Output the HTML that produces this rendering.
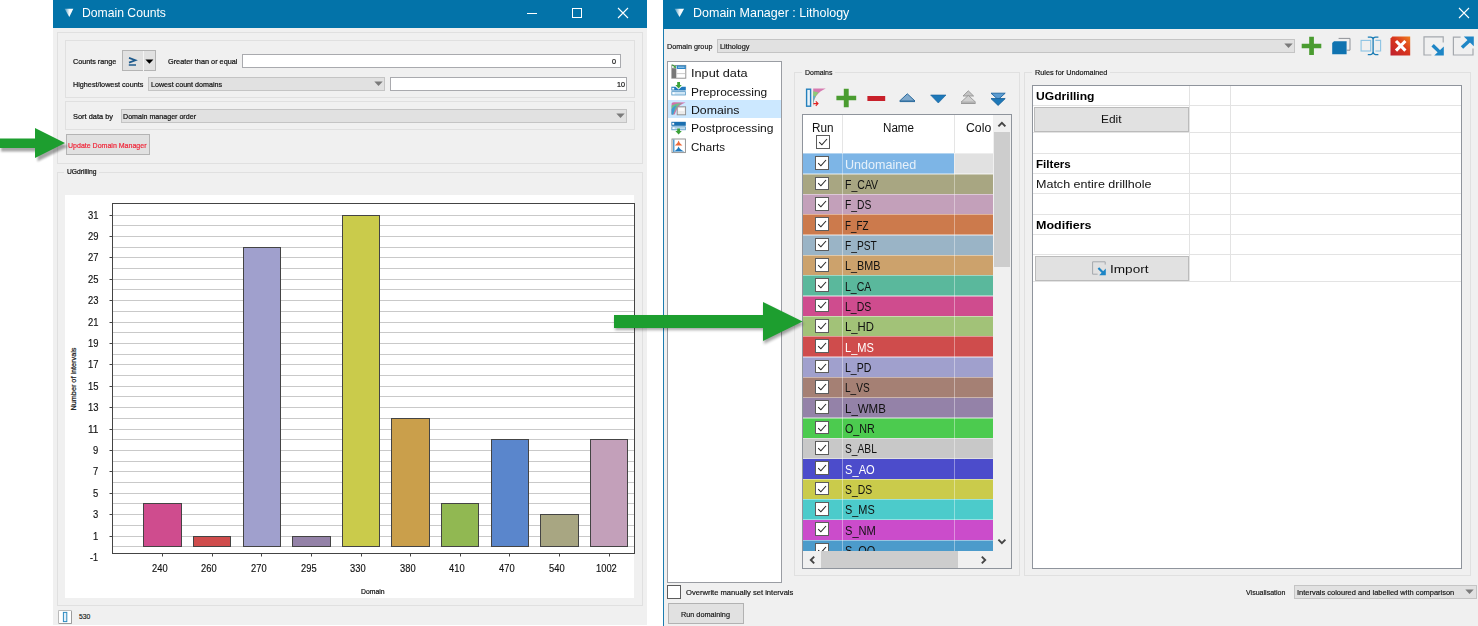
<!DOCTYPE html>
<html><head><meta charset="utf-8"><title>Domain Counts</title>
<style>
html,body{margin:0;padding:0;}
body{width:1478px;height:626px;overflow:hidden;background:#fff;position:relative;
font-family:"Liberation Sans",sans-serif;}
.a{position:absolute;box-sizing:border-box;}
.t{white-space:nowrap;}
</style></head><body>

<div class="a" style="left:53.00px;top:0.00px;width:594.00px;height:625.00px;background:#F0F0F0;"></div>
<div class="a" style="left:53.00px;top:0.00px;width:594.00px;height:28.00px;background:#0373A9;"></div>
<svg class="a" style="left:64.00px;top:8.00px;" width="11" height="11" viewBox="0 0 11 11"><defs><linearGradient id="ti" x1="0" y1="0" x2="1" y2="0"><stop offset="0" stop-color="#fff" stop-opacity="0.25"/><stop offset="0.55" stop-color="#fff" stop-opacity="0.95"/><stop offset="1" stop-color="#fff"/></linearGradient></defs><path d="M0.6 0.8 L9.3 0.8 L5.3 9 Z" fill="url(#ti)"/></svg>
<div class="a t" style="left:82.00px;top:3.80px;font-size:12.6px;line-height:18px;color:#fff;transform:scaleX(0.9673);transform-origin:0 50%;">Domain Counts</div>
<svg class="a" style="left:526.00px;top:7.00px;" width="12" height="12" viewBox="0 0 12 12"><path d="M1 6.5 H11" stroke="#fff" stroke-width="1"/></svg>
<svg class="a" style="left:571.00px;top:7.00px;" width="12" height="12" viewBox="0 0 12 12"><rect x="1.5" y="1.5" width="9" height="9" fill="none" stroke="#fff" stroke-width="1"/></svg>
<svg class="a" style="left:617.00px;top:7.00px;" width="12" height="12" viewBox="0 0 12 12"><path d="M1 1 L11 11 M11 1 L1 11" stroke="#fff" stroke-width="1.1"/></svg>
<div class="a" style="left:57.00px;top:32.00px;width:585.50px;height:131.50px;border:1px solid #E0E0E0;"></div>
<div class="a" style="left:65.00px;top:40.00px;width:570.00px;height:57.50px;border:1px solid #E0E0E0;"></div>
<div class="a t" style="left:72.70px;top:55.80px;font-size:8px;line-height:11px;color:#111;-webkit-text-stroke:0.22px currentColor;transform:scaleX(0.9015);transform-origin:0 50%;">Counts range</div>
<div class="a" style="left:121.50px;top:50.00px;width:34.50px;height:21.30px;background:#E1E1E1;border:1px solid #B4B4B4;"></div>
<div class="a" style="left:142.60px;top:51.00px;width:1.00px;height:19.50px;background:#F4F4F4;"></div>
<svg class="a" style="left:127.00px;top:55.00px;" width="11" height="12" viewBox="0 0 11 12"><path d="M2 2.9 L8.4 5.2 L2 7.6" fill="none" stroke="#1E5A8C" stroke-width="1.7"/><path d="M1.8 10 H9" stroke="#1E5A8C" stroke-width="1.5"/></svg>
<svg class="a" style="left:145.00px;top:58.70px;" width="9" height="6" viewBox="0 0 9 6"><path d="M0.4 0.4 H8.4 L4.4 4.8 Z" fill="#000"/></svg>
<div class="a t" style="left:167.50px;top:55.80px;font-size:8px;line-height:11px;color:#111;-webkit-text-stroke:0.22px currentColor;transform:scaleX(0.9139);transform-origin:0 50%;">Greater than or equal</div>
<div class="a" style="left:242.00px;top:54.00px;width:379.00px;height:13.60px;background:#fff;border:1px solid #A9AAAE;"></div>
<div class="a t" style="left:612.40px;top:55.70px;font-size:8px;line-height:11px;color:#111;-webkit-text-stroke:0.22px currentColor;transform:scaleX(0.8990);transform-origin:0 50%;">0</div>
<div class="a t" style="left:72.70px;top:78.70px;font-size:8px;line-height:11px;color:#111;-webkit-text-stroke:0.22px currentColor;transform:scaleX(0.9034);transform-origin:0 50%;">Highest/lowest counts</div>
<div class="a" style="left:148.00px;top:77.00px;width:237.00px;height:13.60px;background:#E1E1E1;border:1px solid #C4C4C4;"></div>
<div class="a t" style="left:150.50px;top:78.70px;font-size:8px;line-height:11px;color:#111;-webkit-text-stroke:0.22px currentColor;transform:scaleX(0.8919);transform-origin:0 50%;">Lowest count domains</div>
<svg class="a" style="left:374.00px;top:81.00px;" width="9" height="6" viewBox="0 0 9 6"><path d="M0.3 0.5 H8.7 L4.5 5 Z" fill="#7A7A7A"/></svg>
<div class="a" style="left:390.00px;top:76.80px;width:237.30px;height:13.80px;background:#fff;border:1px solid #A9AAAE;"></div>
<div class="a t" style="left:616.70px;top:78.50px;font-size:8px;line-height:11px;color:#111;-webkit-text-stroke:0.22px currentColor;transform:scaleX(0.8990);transform-origin:0 50%;">10</div>
<div class="a" style="left:65.00px;top:101.00px;width:570.00px;height:28.80px;border:1px solid #E0E0E0;"></div>
<div class="a t" style="left:72.70px;top:110.50px;font-size:8px;line-height:11px;color:#111;-webkit-text-stroke:0.22px currentColor;transform:scaleX(0.9273);transform-origin:0 50%;">Sort data by</div>
<div class="a" style="left:121.00px;top:109.40px;width:506.30px;height:13.30px;background:#E1E1E1;border:1px solid #C4C4C4;"></div>
<div class="a t" style="left:123.30px;top:110.80px;font-size:8px;line-height:11px;color:#111;-webkit-text-stroke:0.22px currentColor;transform:scaleX(0.8874);transform-origin:0 50%;">Domain manager order</div>
<svg class="a" style="left:616.00px;top:113.40px;" width="9" height="6" viewBox="0 0 9 6"><path d="M0.3 0.5 H8.7 L4.5 5 Z" fill="#7A7A7A"/></svg>
<div class="a" style="left:66.00px;top:134.30px;width:84.20px;height:21.20px;background:#E1E1E1;border:1px solid #B4B4B4;"></div>
<div class="a t" style="left:67.80px;top:139.80px;font-size:8px;line-height:11px;color:#F0273A;-webkit-text-stroke:0.22px currentColor;transform:scaleX(0.8782);transform-origin:0 50%;">Update Domain Manager</div>
<div class="a" style="left:57.00px;top:171.50px;width:585.50px;height:434.00px;border:1px solid #E0E0E0;"></div>
<div class="a" style="left:64.00px;top:166.00px;width:35.00px;height:10.00px;background:#F0F0F0;"></div>
<div class="a t" style="left:66.50px;top:166.60px;font-size:7.5px;line-height:10px;color:#111;-webkit-text-stroke:0.22px currentColor;transform:scaleX(0.8959);transform-origin:0 50%;">UGdrilling</div>
<div class="a" style="left:65.30px;top:194.80px;width:568.90px;height:403.20px;background:#fff;"></div>
<svg class="a" style="left:0.00px;top:0.00px;" width="700" height="626" viewBox="0 0 700 626"><path d="M112.5 546.50 H634.5" stroke="#C9C9C9" stroke-width="1"/><path d="M112.5 536.50 H634.5" stroke="#C9C9C9" stroke-width="1"/><path d="M112.5 525.50 H634.5" stroke="#C9C9C9" stroke-width="1"/><path d="M112.5 514.50 H634.5" stroke="#C9C9C9" stroke-width="1"/><path d="M112.5 503.50 H634.5" stroke="#C9C9C9" stroke-width="1"/><path d="M112.5 493.50 H634.5" stroke="#C9C9C9" stroke-width="1"/><path d="M112.5 482.50 H634.5" stroke="#C9C9C9" stroke-width="1"/><path d="M112.5 471.50 H634.5" stroke="#C9C9C9" stroke-width="1"/><path d="M112.5 461.50 H634.5" stroke="#C9C9C9" stroke-width="1"/><path d="M112.5 450.50 H634.5" stroke="#C9C9C9" stroke-width="1"/><path d="M112.5 439.50 H634.5" stroke="#C9C9C9" stroke-width="1"/><path d="M112.5 429.50 H634.5" stroke="#C9C9C9" stroke-width="1"/><path d="M112.5 418.50 H634.5" stroke="#C9C9C9" stroke-width="1"/><path d="M112.5 407.50 H634.5" stroke="#C9C9C9" stroke-width="1"/><path d="M112.5 396.50 H634.5" stroke="#C9C9C9" stroke-width="1"/><path d="M112.5 386.50 H634.5" stroke="#C9C9C9" stroke-width="1"/><path d="M112.5 375.50 H634.5" stroke="#C9C9C9" stroke-width="1"/><path d="M112.5 364.50 H634.5" stroke="#C9C9C9" stroke-width="1"/><path d="M112.5 354.50 H634.5" stroke="#C9C9C9" stroke-width="1"/><path d="M112.5 343.50 H634.5" stroke="#C9C9C9" stroke-width="1"/><path d="M112.5 332.50 H634.5" stroke="#C9C9C9" stroke-width="1"/><path d="M112.5 322.50 H634.5" stroke="#C9C9C9" stroke-width="1"/><path d="M112.5 311.50 H634.5" stroke="#C9C9C9" stroke-width="1"/><path d="M112.5 300.50 H634.5" stroke="#C9C9C9" stroke-width="1"/><path d="M112.5 289.50 H634.5" stroke="#C9C9C9" stroke-width="1"/><path d="M112.5 279.50 H634.5" stroke="#C9C9C9" stroke-width="1"/><path d="M112.5 268.50 H634.5" stroke="#C9C9C9" stroke-width="1"/><path d="M112.5 257.50 H634.5" stroke="#C9C9C9" stroke-width="1"/><path d="M112.5 247.50 H634.5" stroke="#C9C9C9" stroke-width="1"/><path d="M112.5 236.50 H634.5" stroke="#C9C9C9" stroke-width="1"/><path d="M112.5 225.50 H634.5" stroke="#C9C9C9" stroke-width="1"/><path d="M112.5 215.50 H634.5" stroke="#C9C9C9" stroke-width="1"/><rect x="143.50" y="503.50" width="38.00" height="43.00" fill="#CF4C8E" stroke="#444" stroke-width="1"/><path d="M162.50 553.5 V556.5" stroke="#444" stroke-width="1"/><rect x="193.50" y="536.50" width="37.00" height="10.00" fill="#CF4C4C" stroke="#444" stroke-width="1"/><path d="M212.50 553.5 V556.5" stroke="#444" stroke-width="1"/><rect x="243.50" y="247.50" width="37.00" height="299.00" fill="#A0A0CD" stroke="#444" stroke-width="1"/><path d="M261.50 553.5 V556.5" stroke="#444" stroke-width="1"/><rect x="292.50" y="536.50" width="38.00" height="10.00" fill="#9482A8" stroke="#444" stroke-width="1"/><path d="M311.50 553.5 V556.5" stroke="#444" stroke-width="1"/><rect x="342.50" y="215.50" width="37.00" height="331.00" fill="#CACB4B" stroke="#444" stroke-width="1"/><path d="M361.50 553.5 V556.5" stroke="#444" stroke-width="1"/><rect x="391.50" y="418.50" width="38.00" height="128.00" fill="#CA9F4B" stroke="#444" stroke-width="1"/><path d="M410.50 553.5 V556.5" stroke="#444" stroke-width="1"/><rect x="441.50" y="503.50" width="37.00" height="43.00" fill="#91B852" stroke="#444" stroke-width="1"/><path d="M460.50 553.5 V556.5" stroke="#444" stroke-width="1"/><rect x="491.50" y="439.50" width="37.00" height="107.00" fill="#5A86CC" stroke="#444" stroke-width="1"/><path d="M509.50 553.5 V556.5" stroke="#444" stroke-width="1"/><rect x="540.50" y="514.50" width="38.00" height="32.00" fill="#A8A682" stroke="#444" stroke-width="1"/><path d="M559.50 553.5 V556.5" stroke="#444" stroke-width="1"/><rect x="590.50" y="439.50" width="37.00" height="107.00" fill="#C3A0BA" stroke="#444" stroke-width="1"/><path d="M609.50 553.5 V556.5" stroke="#444" stroke-width="1"/><rect x="112.5" y="203.5" width="522.0" height="350.0" fill="none" stroke="#444" stroke-width="1"/><path d="M109.5 536.50 H112.5" stroke="#444" stroke-width="1"/><path d="M109.5 514.50 H112.5" stroke="#444" stroke-width="1"/><path d="M109.5 493.50 H112.5" stroke="#444" stroke-width="1"/><path d="M109.5 471.50 H112.5" stroke="#444" stroke-width="1"/><path d="M109.5 450.50 H112.5" stroke="#444" stroke-width="1"/><path d="M109.5 429.50 H112.5" stroke="#444" stroke-width="1"/><path d="M109.5 407.50 H112.5" stroke="#444" stroke-width="1"/><path d="M109.5 386.50 H112.5" stroke="#444" stroke-width="1"/><path d="M109.5 364.50 H112.5" stroke="#444" stroke-width="1"/><path d="M109.5 343.50 H112.5" stroke="#444" stroke-width="1"/><path d="M109.5 322.50 H112.5" stroke="#444" stroke-width="1"/><path d="M109.5 300.50 H112.5" stroke="#444" stroke-width="1"/><path d="M109.5 279.50 H112.5" stroke="#444" stroke-width="1"/><path d="M109.5 257.50 H112.5" stroke="#444" stroke-width="1"/><path d="M109.5 236.50 H112.5" stroke="#444" stroke-width="1"/><path d="M109.5 215.50 H112.5" stroke="#444" stroke-width="1"/></svg>
<div class="a t" style="left:90.20px;top:550.00px;font-size:10.4px;line-height:15px;color:#111;-webkit-text-stroke:0.15px currentColor;transform:scaleX(0.8651);transform-origin:0 50%;">-1</div>
<div class="a t" style="left:92.95px;top:528.60px;font-size:10.4px;line-height:15px;color:#111;-webkit-text-stroke:0.15px currentColor;transform:scaleX(0.9076);transform-origin:0 50%;">1</div>
<div class="a t" style="left:92.95px;top:507.20px;font-size:10.4px;line-height:15px;color:#111;-webkit-text-stroke:0.15px currentColor;transform:scaleX(0.9076);transform-origin:0 50%;">3</div>
<div class="a t" style="left:92.95px;top:485.80px;font-size:10.4px;line-height:15px;color:#111;-webkit-text-stroke:0.15px currentColor;transform:scaleX(0.9076);transform-origin:0 50%;">5</div>
<div class="a t" style="left:92.95px;top:464.40px;font-size:10.4px;line-height:15px;color:#111;-webkit-text-stroke:0.15px currentColor;transform:scaleX(0.9076);transform-origin:0 50%;">7</div>
<div class="a t" style="left:92.95px;top:443.00px;font-size:10.4px;line-height:15px;color:#111;-webkit-text-stroke:0.15px currentColor;transform:scaleX(0.9076);transform-origin:0 50%;">9</div>
<div class="a t" style="left:87.70px;top:421.60px;font-size:10.4px;line-height:15px;color:#111;-webkit-text-stroke:0.15px currentColor;transform:scaleX(0.9725);transform-origin:0 50%;">11</div>
<div class="a t" style="left:87.70px;top:400.20px;font-size:10.4px;line-height:15px;color:#111;-webkit-text-stroke:0.15px currentColor;transform:scaleX(0.9076);transform-origin:0 50%;">13</div>
<div class="a t" style="left:87.70px;top:378.80px;font-size:10.4px;line-height:15px;color:#111;-webkit-text-stroke:0.15px currentColor;transform:scaleX(0.9076);transform-origin:0 50%;">15</div>
<div class="a t" style="left:87.70px;top:357.40px;font-size:10.4px;line-height:15px;color:#111;-webkit-text-stroke:0.15px currentColor;transform:scaleX(0.9076);transform-origin:0 50%;">17</div>
<div class="a t" style="left:87.70px;top:336.00px;font-size:10.4px;line-height:15px;color:#111;-webkit-text-stroke:0.15px currentColor;transform:scaleX(0.9076);transform-origin:0 50%;">19</div>
<div class="a t" style="left:87.70px;top:314.60px;font-size:10.4px;line-height:15px;color:#111;-webkit-text-stroke:0.15px currentColor;transform:scaleX(0.9076);transform-origin:0 50%;">21</div>
<div class="a t" style="left:87.70px;top:293.20px;font-size:10.4px;line-height:15px;color:#111;-webkit-text-stroke:0.15px currentColor;transform:scaleX(0.9076);transform-origin:0 50%;">23</div>
<div class="a t" style="left:87.70px;top:271.80px;font-size:10.4px;line-height:15px;color:#111;-webkit-text-stroke:0.15px currentColor;transform:scaleX(0.9076);transform-origin:0 50%;">25</div>
<div class="a t" style="left:87.70px;top:250.40px;font-size:10.4px;line-height:15px;color:#111;-webkit-text-stroke:0.15px currentColor;transform:scaleX(0.9076);transform-origin:0 50%;">27</div>
<div class="a t" style="left:87.70px;top:229.00px;font-size:10.4px;line-height:15px;color:#111;-webkit-text-stroke:0.15px currentColor;transform:scaleX(0.9076);transform-origin:0 50%;">29</div>
<div class="a t" style="left:87.70px;top:207.60px;font-size:10.4px;line-height:15px;color:#111;-webkit-text-stroke:0.15px currentColor;transform:scaleX(0.9076);transform-origin:0 50%;">31</div>
<div class="a t" style="left:151.80px;top:560.50px;font-size:10.4px;line-height:15px;color:#111;-webkit-text-stroke:0.15px currentColor;transform:scaleX(0.8990);transform-origin:0 50%;">240</div>
<div class="a t" style="left:201.40px;top:560.50px;font-size:10.4px;line-height:15px;color:#111;-webkit-text-stroke:0.15px currentColor;transform:scaleX(0.8990);transform-origin:0 50%;">260</div>
<div class="a t" style="left:251.00px;top:560.50px;font-size:10.4px;line-height:15px;color:#111;-webkit-text-stroke:0.15px currentColor;transform:scaleX(0.8990);transform-origin:0 50%;">270</div>
<div class="a t" style="left:300.60px;top:560.50px;font-size:10.4px;line-height:15px;color:#111;-webkit-text-stroke:0.15px currentColor;transform:scaleX(0.8990);transform-origin:0 50%;">295</div>
<div class="a t" style="left:350.20px;top:560.50px;font-size:10.4px;line-height:15px;color:#111;-webkit-text-stroke:0.15px currentColor;transform:scaleX(0.8990);transform-origin:0 50%;">330</div>
<div class="a t" style="left:399.80px;top:560.50px;font-size:10.4px;line-height:15px;color:#111;-webkit-text-stroke:0.15px currentColor;transform:scaleX(0.8990);transform-origin:0 50%;">380</div>
<div class="a t" style="left:449.40px;top:560.50px;font-size:10.4px;line-height:15px;color:#111;-webkit-text-stroke:0.15px currentColor;transform:scaleX(0.8990);transform-origin:0 50%;">410</div>
<div class="a t" style="left:499.00px;top:560.50px;font-size:10.4px;line-height:15px;color:#111;-webkit-text-stroke:0.15px currentColor;transform:scaleX(0.8990);transform-origin:0 50%;">470</div>
<div class="a t" style="left:548.60px;top:560.50px;font-size:10.4px;line-height:15px;color:#111;-webkit-text-stroke:0.15px currentColor;transform:scaleX(0.8990);transform-origin:0 50%;">540</div>
<div class="a t" style="left:595.60px;top:560.50px;font-size:10.4px;line-height:15px;color:#111;-webkit-text-stroke:0.15px currentColor;transform:scaleX(0.8990);transform-origin:0 50%;">1002</div>
<div class="a t" style="left:360.80px;top:587.30px;font-size:7.0px;line-height:10px;color:#111;-webkit-text-stroke:0.2px currentColor;transform:scaleX(0.9784);transform-origin:0 50%;">Domain</div>
<div class="a t" style="left:74px;top:379.4px;width:0;height:0;"><div class="a t" style="left:-50px;top:-5px;width:100px;height:10px;line-height:10px;font-size:7.25px;text-align:center;color:#111;-webkit-text-stroke:0.2px #111;transform:rotate(-90deg);">Number of intervals</div></div>
<div class="a" style="left:58.00px;top:609.60px;width:14.40px;height:14.80px;background:#fff;border:1px solid #b9b9b9;border-radius:1.5px;border-right-color:#9c9c9c;border-bottom-color:#9c9c9c;"></div>
<svg class="a" style="left:62.00px;top:611.00px;" width="7" height="12" viewBox="0 0 7 12"><rect x="1.4" y="1.4" width="3.4" height="9.2" fill="#E3EFF8" stroke="#2E8BC0" stroke-width="1"/></svg>
<div class="a t" style="left:79.00px;top:612.00px;font-size:6.8px;line-height:10px;color:#111;-webkit-text-stroke:0.14px currentColor;">530</div>
<div class="a" style="left:663.00px;top:0.00px;width:815.00px;height:626.00px;background:#F0F0F0;"></div>
<div class="a" style="left:663.00px;top:0.00px;width:1.00px;height:626.00px;background:#1C7CB0;"></div>
<div class="a" style="left:663.00px;top:0.00px;width:815.00px;height:28.50px;background:#0373A9;"></div>
<svg class="a" style="left:674.00px;top:8.00px;" width="11" height="11" viewBox="0 0 11 11"><path d="M0.6 0.8 L10.1 0.8 L5.5 9 Z" fill="url(#ti)"/></svg>
<div class="a t" style="left:693.30px;top:5.20px;font-size:12.2px;line-height:17px;color:#fff;transform:scaleX(1.0256);transform-origin:0 50%;">Domain Manager : Lithology</div>
<svg class="a" style="left:1458.00px;top:7.00px;" width="12" height="12" viewBox="0 0 12 12"><path d="M1 1 L11 11 M11 1 L1 11" stroke="#fff" stroke-width="1.1"/></svg>
<div class="a t" style="left:666.80px;top:41.70px;font-size:6.4px;line-height:9px;color:#111;-webkit-text-stroke:0.14px currentColor;transform:scaleX(1.1318);transform-origin:0 50%;">Domain group</div>
<div class="a" style="left:717.30px;top:39.30px;width:577.70px;height:13.50px;background:#E1E1E1;border:1px solid #C4C4C4;"></div>
<div class="a t" style="left:720.00px;top:41.70px;font-size:6.4px;line-height:9px;color:#111;-webkit-text-stroke:0.14px currentColor;transform:scaleX(1.1515);transform-origin:0 50%;">Lithology</div>
<svg class="a" style="left:1284.00px;top:43.20px;" width="9" height="6" viewBox="0 0 9 6"><path d="M0.3 0.5 H8.7 L4.5 5 Z" fill="#7A7A7A"/></svg>
<svg class="a" style="left:1301.00px;top:36.00px;" width="22" height="20" viewBox="0 0 22 20"><path d="M8.2 0.8 H12.9 V7.7 H20.3 V12.3 H12.9 V19.1 H8.2 V12.3 H0.7 V7.7 H8.2 Z" fill="#4A9C30"/></svg>
<svg class="a" style="left:1331.00px;top:36.00px;" width="22" height="20" viewBox="0 0 22 20"><path d="M7.6 2.4 H19 V14.2 H15.6" fill="#F0F0F0" stroke="#8e9298" stroke-width="1"/><path d="M1.2 7 L3 5.3 H15.6 V18.2 H1.2 Z" fill="#0F73B0"/></svg>
<svg class="a" style="left:1360.00px;top:36.00px;" width="22" height="20" viewBox="0 0 22 20"><rect x="1.1" y="4.4" width="9.6" height="10.6" fill="none" stroke="#8CC3E3" stroke-width="1.1"/><path d="M15.4 4.4 H20.6 V15 H15.4" fill="none" stroke="#8CC3E3" stroke-width="1.1"/><path d="M7.8 1.2 H10.6 Q13.1 1.2 13.1 3.6 V15.8 Q13.1 18.2 10.6 18.6 H7.8 M18.4 1.2 H15.6 Q13.1 1.2 13.1 3.6 M18.4 18.6 H15.6 Q13.1 18.2 13.1 15.8" fill="none" stroke="#1A7CB5" stroke-width="1.3"/></svg>
<svg class="a" style="left:1390.00px;top:36.00px;" width="22" height="20" viewBox="0 0 22 20"><defs><linearGradient id="rg" x1="0" y1="1" x2="1" y2="0"><stop offset="0" stop-color="#BE1E2D"/><stop offset="0.55" stop-color="#D9381E"/><stop offset="1" stop-color="#F08020"/></linearGradient></defs><path d="M2.4 0.4 H20.2 V19.4 H0.5 V2.6 Z" fill="url(#rg)"/><path d="M6 5 L15.4 14.6 M15.4 5 L6 14.6" stroke="#fff" stroke-width="3.1"/></svg>
<svg class="a" style="left:1423.00px;top:36.00px;" width="22" height="20" viewBox="0 0 22 20"><path d="M20.2 6.4 V0.9 H1 V19 H8.4" fill="none" stroke="#a4a8ad" stroke-width="1.2"/><path d="M9.6 9.2 L17 16.4" stroke="#1E86C6" stroke-width="3.4"/><path d="M20.8 10.4 V19.6 H11.2 Z" fill="#1E86C6"/></svg>
<svg class="a" style="left:1452.00px;top:36.00px;" width="23" height="20" viewBox="0 0 23 20"><path d="M8.6 1.2 H1.4 V19 H21 V12.4" fill="none" stroke="#a4a8ad" stroke-width="1.2"/><path d="M10 11.6 L17.6 4.4" stroke="#1E86C6" stroke-width="3.4"/><path d="M11.8 0.6 H21.8 V10.2 Z" fill="#1E86C6"/></svg>
<div class="a" style="left:667.00px;top:61.00px;width:115.00px;height:521.60px;background:#fff;border:1px solid #9a9da3;"></div>
<div class="a" style="left:668.00px;top:100.00px;width:113.00px;height:17.80px;background:#CCE8FF;"></div>
<div class="a t" style="left:691.00px;top:65.30px;font-size:11.8px;line-height:17px;color:#111;transform:scaleX(1.0764);transform-origin:0 50%;">Input data</div>
<div class="a t" style="left:691.00px;top:84.20px;font-size:11.8px;line-height:17px;color:#111;transform:scaleX(1.0102);transform-origin:0 50%;">Preprocessing</div>
<div class="a t" style="left:691.00px;top:102.10px;font-size:11.8px;line-height:17px;color:#111;transform:scaleX(1.0416);transform-origin:0 50%;">Domains</div>
<div class="a t" style="left:691.00px;top:120.30px;font-size:11.8px;line-height:17px;color:#111;transform:scaleX(1.0226);transform-origin:0 50%;">Postprocessing</div>
<div class="a t" style="left:691.00px;top:139.10px;font-size:11.8px;line-height:17px;color:#111;transform:scaleX(0.9783);transform-origin:0 50%;">Charts</div>
<svg class="a" style="left:671.00px;top:64.00px;" width="16" height="16" viewBox="0 0 16 16"><rect x="0.8" y="1.4" width="14" height="12.8" fill="#fff" stroke="#8a8a8a" stroke-width="0.9"/><rect x="1" y="4.2" width="4" height="9.8" fill="#777"/><rect x="5.6" y="1.4" width="9.2" height="3.6" fill="#2C86C7"/><path d="M7 3.2 H13.5" stroke="#cfe6f6" stroke-width="0.8"/><path d="M5.6 5 V14 M5.6 9.6 H14.8" stroke="#b5b5b5" stroke-width="0.7"/><path d="M0.2 0.8 L2 0.6 L3.6 2.2 L4.6 1.2 L5 4 L2.2 3.6 L3 2.8 L1.4 1.4 Z" fill="#2E9B2E"/></svg>
<svg class="a" style="left:671.00px;top:82.00px;" width="16" height="16" viewBox="0 0 16 16"><path d="M6.2 0 H9 V3 H10.8 L7.6 6.4 L4.4 3 H6.2 Z" fill="#3DA23A"/><path d="M0.4 4.8 H4.4 L7.6 7.4 L10.8 4.8 H14.8 V8.6 H0.4 Z" fill="#1F79BC"/><rect x="1.2" y="5.8" width="2" height="1.8" fill="#fff"/><rect x="0.8" y="9.6" width="13.6" height="3.4" fill="#cfe6f6" stroke="#5b9bc7" stroke-width="0.8"/><rect x="1.6" y="10.4" width="2" height="1.8" fill="#fff"/></svg>
<svg class="a" style="left:671.00px;top:101.00px;" width="16" height="16" viewBox="0 0 16 16"><path d="M0.6 13.6 V2.6 Q1.2 1.2 3 1.2 L14.6 1.4 Q8 3.4 6 8 L3.6 13.6 Z" fill="#D46FA8"/><path d="M0.6 13.6 V4.4 Q5 2.2 11 2 Q6 4.6 4.6 8.6 L2.2 13.6 Z" fill="#6FC08A"/><path d="M0.6 13.6 V8 Q2.4 5.4 5.6 4 Q3.6 7.4 2.2 13.6 Z" fill="#3E9AD6"/><rect x="6.2" y="5.8" width="8.4" height="8" fill="#ececec" stroke="#8c8c8c" stroke-width="0.9"/><rect x="7.4" y="7" width="6" height="3" fill="#fafafa"/></svg>
<svg class="a" style="left:671.00px;top:121.00px;" width="16" height="16" viewBox="0 0 16 16"><rect x="0.4" y="0.8" width="14.4" height="4" fill="#1A6FB0"/><rect x="1.2" y="1.8" width="2" height="1.9" fill="#fff"/><rect x="0.8" y="5.8" width="13.6" height="3" fill="#bfdcf0" stroke="#5b9bc7" stroke-width="0.8"/><rect x="1.6" y="6.4" width="2" height="1.6" fill="#fff"/><path d="M6.2 7.6 H9 V10 H10.8 L7.6 13.4 L4.4 10 H6.2 Z" fill="#3DA23A"/></svg>
<svg class="a" style="left:671.00px;top:138.00px;" width="16" height="16" viewBox="0 0 16 16"><rect x="1" y="1" width="13.4" height="13.6" fill="#fff" stroke="#8c8c8c" stroke-width="0.9"/><path d="M2.8 1.6 V14" stroke="#2C86C7" stroke-width="1.2"/><path d="M7.6 2.4 Q8.4 5.6 11.4 7.6 H3.8 Q6.8 5.6 7.6 2.4 Z" fill="#EE6A3A"/><path d="M7.6 8.4 Q8.6 11.6 13.4 13.4 H3.2 Q6.6 11.6 7.6 8.4 Z" fill="#1F79BC"/></svg>
<div class="a" style="left:794.00px;top:72.00px;width:225.50px;height:504.00px;border:1px solid #E0E0E0;"></div>
<div class="a" style="left:802.00px;top:67.00px;width:33.00px;height:10.00px;background:#F0F0F0;"></div>
<div class="a t" style="left:804.50px;top:67.70px;font-size:6.4px;line-height:9px;color:#111;-webkit-text-stroke:0.14px currentColor;transform:scaleX(1.0889);transform-origin:0 50%;">Domains</div>
<svg class="a" style="left:805.00px;top:88.00px;" width="22" height="20" viewBox="0 0 22 20"><rect x="1.6" y="1.2" width="4" height="17" fill="#EAF3FA" stroke="#2480BC" stroke-width="1.4"/><path d="M8.2 18.4 Q8.6 5.4 20.8 0.4 H8.2 Z" fill="#D77BB0"/><path d="M8.2 18.4 Q8.4 9.4 13.6 4.4 L8.2 3.2 Z" fill="#8CCB78"/><path d="M8.2 18.4 Q8.2 12 10.2 8.4 L8.2 7.6 Z" fill="#56A8DC"/><path d="M8.4 15.6 H12.6 M10.8 13.4 L13 15.6 L10.8 17.8" stroke="#E02020" stroke-width="1.1" fill="none"/></svg>
<svg class="a" style="left:836.00px;top:88.20px;" width="21" height="20" viewBox="0 0 21 20"><path d="M7.8 0.8 H12.7 V7.7 H20.2 V12.3 H12.7 V19.2 H7.8 V12.3 H0.4 V7.7 H7.8 Z" fill="#4A9C30"/></svg>
<svg class="a" style="left:866.50px;top:95.60px;" width="19" height="6" viewBox="0 0 19 6"><rect x="0.4" y="0" width="17.8" height="5" fill="#C8202A"/></svg>
<svg class="a" style="left:899.00px;top:92.50px;" width="17" height="10" viewBox="0 0 17 10"><path d="M8.3 0.8 L16 8 H0.6 Z" fill="#7FA8CB"/><path d="M8.3 0.8 L16 8 H0.6 Z M1 8.6 H16" fill="none" stroke="#2B6A9C" stroke-width="1"/></svg>
<svg class="a" style="left:929.50px;top:93.50px;" width="17" height="10" viewBox="0 0 17 10"><path d="M0.6 1 H16 L8.3 9 Z" fill="#1E78B8" stroke="#15609a" stroke-width="0.6"/></svg>
<svg class="a" style="left:959.50px;top:90.00px;" width="17" height="15" viewBox="0 0 17 15"><path d="M8.3 0.8 L13.6 6 H3 Z" fill="#c4c4c4" stroke="#8e8e8e" stroke-width="0.8"/><path d="M8.3 5.4 L15.6 12.2 H1 Z" fill="#cfcfcf" stroke="#8e8e8e" stroke-width="0.8"/><path d="M1 13.4 H15.6" stroke="#8e8e8e"/></svg>
<svg class="a" style="left:989.50px;top:91.50px;" width="17" height="15" viewBox="0 0 17 15"><path d="M1 1.2 H15.2 L8.1 7.6 Z" fill="#5B9BD0" stroke="#1B64A0" stroke-width="0.9"/><path d="M1 6.6 H15.2 L8.1 13.4 Z" fill="#1E78B8" stroke="#15609a" stroke-width="0.9"/></svg>
<div class="a" style="left:802.00px;top:114.00px;width:210.00px;height:455.00px;background:#fff;border:1px solid #8f949c;"></div>
<div class="a" style="left:841.80px;top:115.00px;width:1.00px;height:38.00px;background:#E5E5E5;"></div>
<div class="a" style="left:954.20px;top:115.00px;width:1.00px;height:38.00px;background:#E5E5E5;"></div>
<div class="a t" style="left:811.95px;top:120.10px;font-size:12px;line-height:17px;color:#111;transform:scaleX(0.9766);transform-origin:0 50%;">Run</div>
<div class="a t" style="left:883.00px;top:120.10px;font-size:12px;line-height:17px;color:#111;transform:scaleX(0.9684);transform-origin:0 50%;">Name</div>
<div class="a t" style="left:966.30px;top:120.10px;font-size:12px;line-height:17px;color:#111;transform:scaleX(1.0210);transform-origin:0 50%;">Colo</div>
<div class="a" style="left:815.50px;top:135.30px;width:14.20px;height:14.20px;background:#fff;border:1px solid #5c5c5c;"></div>
<svg class="a" style="left:816.60px;top:136.40px;" width="12" height="12" viewBox="0 0 12 12"><path d="M2.2 6.2 L4.9 8.8 L10 3" fill="none" stroke="#2a2a2a" stroke-width="1.1"/></svg>
<div class="a" style="left:803px;top:153.4px;width:190.20000000000005px;height:397.4px;overflow:hidden;">
<div class="a" style="left:0.00px;top:0.00px;width:190.20px;height:20.34px;background:#7DB5E6;"></div>
<div class="a" style="left:151.20px;top:0.00px;width:39.00px;height:20.34px;background:#E1E1E1;"></div>
<div class="a" style="left:0.00px;top:-0.40px;width:190.20px;height:1.20px;background:rgba(255,255,255,0.42);"></div>
<div class="a" style="left:38.80px;top:0.00px;width:1.00px;height:20.34px;background:rgba(255,255,255,0.38);"></div>
<div class="a" style="left:151.20px;top:0.00px;width:1.00px;height:20.34px;background:rgba(255,255,255,0.38);"></div>
<div class="a" style="left:11.90px;top:2.77px;width:13.80px;height:13.80px;background:#fff;border:1px solid #5c5c5c;"></div>
<svg class="a" style="left:12.80px;top:3.67px;" width="12" height="12" viewBox="0 0 12 12"><path d="M2.2 6.2 L4.9 8.8 L10 3" fill="none" stroke="#2a2a2a" stroke-width="1.1"/></svg>
<div class="a t" style="left:41.80px;top:3.17px;font-size:12.4px;line-height:17px;color:#E6F1FA;transform:scaleX(1.0137);transform-origin:0 50%;">Undomained</div>
<div class="a" style="left:0.00px;top:20.34px;width:190.20px;height:20.34px;background:#A8A682;"></div>
<div class="a" style="left:0.00px;top:19.95px;width:190.20px;height:1.20px;background:rgba(255,255,255,0.42);"></div>
<div class="a" style="left:38.80px;top:20.34px;width:1.00px;height:20.34px;background:rgba(255,255,255,0.38);"></div>
<div class="a" style="left:151.20px;top:20.34px;width:1.00px;height:20.34px;background:rgba(255,255,255,0.38);"></div>
<div class="a" style="left:11.90px;top:23.12px;width:13.80px;height:13.80px;background:#fff;border:1px solid #5c5c5c;"></div>
<svg class="a" style="left:12.80px;top:24.02px;" width="12" height="12" viewBox="0 0 12 12"><path d="M2.2 6.2 L4.9 8.8 L10 3" fill="none" stroke="#2a2a2a" stroke-width="1.1"/></svg>
<div class="a t" style="left:41.80px;top:23.52px;font-size:12.4px;line-height:17px;color:#111;transform:scaleX(0.8494);transform-origin:0 50%;">F_CAV</div>
<div class="a" style="left:0.00px;top:40.69px;width:190.20px;height:20.34px;background:#C3A0BA;"></div>
<div class="a" style="left:0.00px;top:40.29px;width:190.20px;height:1.20px;background:rgba(255,255,255,0.42);"></div>
<div class="a" style="left:38.80px;top:40.69px;width:1.00px;height:20.34px;background:rgba(255,255,255,0.38);"></div>
<div class="a" style="left:151.20px;top:40.69px;width:1.00px;height:20.34px;background:rgba(255,255,255,0.38);"></div>
<div class="a" style="left:11.90px;top:43.46px;width:13.80px;height:13.80px;background:#fff;border:1px solid #5c5c5c;"></div>
<svg class="a" style="left:12.80px;top:44.36px;" width="12" height="12" viewBox="0 0 12 12"><path d="M2.2 6.2 L4.9 8.8 L10 3" fill="none" stroke="#2a2a2a" stroke-width="1.1"/></svg>
<div class="a t" style="left:41.80px;top:43.86px;font-size:12.4px;line-height:17px;color:#111;transform:scaleX(0.8319);transform-origin:0 50%;">F_DS</div>
<div class="a" style="left:0.00px;top:61.03px;width:190.20px;height:20.34px;background:#CC7A4C;"></div>
<div class="a" style="left:0.00px;top:60.63px;width:190.20px;height:1.20px;background:rgba(255,255,255,0.42);"></div>
<div class="a" style="left:38.80px;top:61.03px;width:1.00px;height:20.34px;background:rgba(255,255,255,0.38);"></div>
<div class="a" style="left:151.20px;top:61.03px;width:1.00px;height:20.34px;background:rgba(255,255,255,0.38);"></div>
<div class="a" style="left:11.90px;top:63.81px;width:13.80px;height:13.80px;background:#fff;border:1px solid #5c5c5c;"></div>
<svg class="a" style="left:12.80px;top:64.71px;" width="12" height="12" viewBox="0 0 12 12"><path d="M2.2 6.2 L4.9 8.8 L10 3" fill="none" stroke="#2a2a2a" stroke-width="1.1"/></svg>
<div class="a t" style="left:41.80px;top:64.21px;font-size:12.4px;line-height:17px;color:#111;transform:scaleX(0.7928);transform-origin:0 50%;">F_FZ</div>
<div class="a" style="left:0.00px;top:81.38px;width:190.20px;height:20.34px;background:#9AB4C6;"></div>
<div class="a" style="left:0.00px;top:80.98px;width:190.20px;height:1.20px;background:rgba(255,255,255,0.42);"></div>
<div class="a" style="left:38.80px;top:81.38px;width:1.00px;height:20.34px;background:rgba(255,255,255,0.38);"></div>
<div class="a" style="left:151.20px;top:81.38px;width:1.00px;height:20.34px;background:rgba(255,255,255,0.38);"></div>
<div class="a" style="left:11.90px;top:84.15px;width:13.80px;height:13.80px;background:#fff;border:1px solid #5c5c5c;"></div>
<svg class="a" style="left:12.80px;top:85.05px;" width="12" height="12" viewBox="0 0 12 12"><path d="M2.2 6.2 L4.9 8.8 L10 3" fill="none" stroke="#2a2a2a" stroke-width="1.1"/></svg>
<div class="a t" style="left:41.80px;top:84.55px;font-size:12.4px;line-height:17px;color:#111;transform:scaleX(0.8248);transform-origin:0 50%;">F_PST</div>
<div class="a" style="left:0.00px;top:101.72px;width:190.20px;height:20.34px;background:#CCA26C;"></div>
<div class="a" style="left:0.00px;top:101.32px;width:190.20px;height:1.20px;background:rgba(255,255,255,0.42);"></div>
<div class="a" style="left:38.80px;top:101.72px;width:1.00px;height:20.34px;background:rgba(255,255,255,0.38);"></div>
<div class="a" style="left:151.20px;top:101.72px;width:1.00px;height:20.34px;background:rgba(255,255,255,0.38);"></div>
<div class="a" style="left:11.90px;top:104.50px;width:13.80px;height:13.80px;background:#fff;border:1px solid #5c5c5c;"></div>
<svg class="a" style="left:12.80px;top:105.40px;" width="12" height="12" viewBox="0 0 12 12"><path d="M2.2 6.2 L4.9 8.8 L10 3" fill="none" stroke="#2a2a2a" stroke-width="1.1"/></svg>
<div class="a t" style="left:41.80px;top:104.90px;font-size:12.4px;line-height:17px;color:#111;transform:scaleX(0.8713);transform-origin:0 50%;">L_BMB</div>
<div class="a" style="left:0.00px;top:122.07px;width:190.20px;height:20.34px;background:#5AB89C;"></div>
<div class="a" style="left:0.00px;top:121.67px;width:190.20px;height:1.20px;background:rgba(255,255,255,0.42);"></div>
<div class="a" style="left:38.80px;top:122.07px;width:1.00px;height:20.34px;background:rgba(255,255,255,0.38);"></div>
<div class="a" style="left:151.20px;top:122.07px;width:1.00px;height:20.34px;background:rgba(255,255,255,0.38);"></div>
<div class="a" style="left:11.90px;top:124.84px;width:13.80px;height:13.80px;background:#fff;border:1px solid #5c5c5c;"></div>
<svg class="a" style="left:12.80px;top:125.74px;" width="12" height="12" viewBox="0 0 12 12"><path d="M2.2 6.2 L4.9 8.8 L10 3" fill="none" stroke="#2a2a2a" stroke-width="1.1"/></svg>
<div class="a t" style="left:41.80px;top:125.24px;font-size:12.4px;line-height:17px;color:#111;transform:scaleX(0.8500);transform-origin:0 50%;">L_CA</div>
<div class="a" style="left:0.00px;top:142.41px;width:190.20px;height:20.34px;background:#CF4C8E;"></div>
<div class="a" style="left:0.00px;top:142.01px;width:190.20px;height:1.20px;background:rgba(255,255,255,0.42);"></div>
<div class="a" style="left:38.80px;top:142.41px;width:1.00px;height:20.34px;background:rgba(255,255,255,0.38);"></div>
<div class="a" style="left:151.20px;top:142.41px;width:1.00px;height:20.34px;background:rgba(255,255,255,0.38);"></div>
<div class="a" style="left:11.90px;top:145.19px;width:13.80px;height:13.80px;background:#fff;border:1px solid #5c5c5c;"></div>
<svg class="a" style="left:12.80px;top:146.09px;" width="12" height="12" viewBox="0 0 12 12"><path d="M2.2 6.2 L4.9 8.8 L10 3" fill="none" stroke="#2a2a2a" stroke-width="1.1"/></svg>
<div class="a t" style="left:41.80px;top:145.59px;font-size:12.4px;line-height:17px;color:#111;transform:scaleX(0.8500);transform-origin:0 50%;">L_DS</div>
<div class="a" style="left:0.00px;top:162.76px;width:190.20px;height:20.34px;background:#A2C278;"></div>
<div class="a" style="left:0.00px;top:162.36px;width:190.20px;height:1.20px;background:rgba(255,255,255,0.42);"></div>
<div class="a" style="left:38.80px;top:162.76px;width:1.00px;height:20.34px;background:rgba(255,255,255,0.38);"></div>
<div class="a" style="left:151.20px;top:162.76px;width:1.00px;height:20.34px;background:rgba(255,255,255,0.38);"></div>
<div class="a" style="left:11.90px;top:165.53px;width:13.80px;height:13.80px;background:#fff;border:1px solid #5c5c5c;"></div>
<svg class="a" style="left:12.80px;top:166.43px;" width="12" height="12" viewBox="0 0 12 12"><path d="M2.2 6.2 L4.9 8.8 L10 3" fill="none" stroke="#2a2a2a" stroke-width="1.1"/></svg>
<div class="a t" style="left:41.80px;top:165.93px;font-size:12.4px;line-height:17px;color:#111;transform:scaleX(0.9129);transform-origin:0 50%;">L_HD</div>
<div class="a" style="left:0.00px;top:183.10px;width:190.20px;height:20.34px;background:#CF4C4C;"></div>
<div class="a" style="left:0.00px;top:182.70px;width:190.20px;height:1.20px;background:rgba(255,255,255,0.42);"></div>
<div class="a" style="left:38.80px;top:183.10px;width:1.00px;height:20.34px;background:rgba(255,255,255,0.38);"></div>
<div class="a" style="left:151.20px;top:183.10px;width:1.00px;height:20.34px;background:rgba(255,255,255,0.38);"></div>
<div class="a" style="left:11.90px;top:185.88px;width:13.80px;height:13.80px;background:#fff;border:1px solid #5c5c5c;"></div>
<svg class="a" style="left:12.80px;top:186.78px;" width="12" height="12" viewBox="0 0 12 12"><path d="M2.2 6.2 L4.9 8.8 L10 3" fill="none" stroke="#2a2a2a" stroke-width="1.1"/></svg>
<div class="a t" style="left:41.80px;top:186.28px;font-size:12.4px;line-height:17px;color:#fff;transform:scaleX(0.8935);transform-origin:0 50%;">L_MS</div>
<div class="a" style="left:0.00px;top:203.45px;width:190.20px;height:20.34px;background:#A0A0CD;"></div>
<div class="a" style="left:0.00px;top:203.05px;width:190.20px;height:1.20px;background:rgba(255,255,255,0.42);"></div>
<div class="a" style="left:38.80px;top:203.45px;width:1.00px;height:20.34px;background:rgba(255,255,255,0.38);"></div>
<div class="a" style="left:151.20px;top:203.45px;width:1.00px;height:20.34px;background:rgba(255,255,255,0.38);"></div>
<div class="a" style="left:11.90px;top:206.22px;width:13.80px;height:13.80px;background:#fff;border:1px solid #5c5c5c;"></div>
<svg class="a" style="left:12.80px;top:207.12px;" width="12" height="12" viewBox="0 0 12 12"><path d="M2.2 6.2 L4.9 8.8 L10 3" fill="none" stroke="#2a2a2a" stroke-width="1.1"/></svg>
<div class="a t" style="left:41.80px;top:206.62px;font-size:12.4px;line-height:17px;color:#111;transform:scaleX(0.8500);transform-origin:0 50%;">L_PD</div>
<div class="a" style="left:0.00px;top:223.79px;width:190.20px;height:20.34px;background:#A58074;"></div>
<div class="a" style="left:0.00px;top:223.39px;width:190.20px;height:1.20px;background:rgba(255,255,255,0.42);"></div>
<div class="a" style="left:38.80px;top:223.79px;width:1.00px;height:20.34px;background:rgba(255,255,255,0.38);"></div>
<div class="a" style="left:151.20px;top:223.79px;width:1.00px;height:20.34px;background:rgba(255,255,255,0.38);"></div>
<div class="a" style="left:11.90px;top:226.57px;width:13.80px;height:13.80px;background:#fff;border:1px solid #5c5c5c;"></div>
<svg class="a" style="left:12.80px;top:227.47px;" width="12" height="12" viewBox="0 0 12 12"><path d="M2.2 6.2 L4.9 8.8 L10 3" fill="none" stroke="#2a2a2a" stroke-width="1.1"/></svg>
<div class="a t" style="left:41.80px;top:226.97px;font-size:12.4px;line-height:17px;color:#111;transform:scaleX(0.8115);transform-origin:0 50%;">L_VS</div>
<div class="a" style="left:0.00px;top:244.14px;width:190.20px;height:20.34px;background:#9482A8;"></div>
<div class="a" style="left:0.00px;top:243.74px;width:190.20px;height:1.20px;background:rgba(255,255,255,0.42);"></div>
<div class="a" style="left:38.80px;top:244.14px;width:1.00px;height:20.34px;background:rgba(255,255,255,0.38);"></div>
<div class="a" style="left:151.20px;top:244.14px;width:1.00px;height:20.34px;background:rgba(255,255,255,0.38);"></div>
<div class="a" style="left:11.90px;top:246.91px;width:13.80px;height:13.80px;background:#fff;border:1px solid #5c5c5c;"></div>
<svg class="a" style="left:12.80px;top:247.81px;" width="12" height="12" viewBox="0 0 12 12"><path d="M2.2 6.2 L4.9 8.8 L10 3" fill="none" stroke="#2a2a2a" stroke-width="1.1"/></svg>
<div class="a t" style="left:41.80px;top:247.31px;font-size:12.4px;line-height:17px;color:#111;transform:scaleX(0.9273);transform-origin:0 50%;">L_WMB</div>
<div class="a" style="left:0.00px;top:264.49px;width:190.20px;height:20.34px;background:#4CCB4F;"></div>
<div class="a" style="left:0.00px;top:264.09px;width:190.20px;height:1.20px;background:rgba(255,255,255,0.42);"></div>
<div class="a" style="left:38.80px;top:264.49px;width:1.00px;height:20.34px;background:rgba(255,255,255,0.38);"></div>
<div class="a" style="left:151.20px;top:264.49px;width:1.00px;height:20.34px;background:rgba(255,255,255,0.38);"></div>
<div class="a" style="left:11.90px;top:267.26px;width:13.80px;height:13.80px;background:#fff;border:1px solid #5c5c5c;"></div>
<svg class="a" style="left:12.80px;top:268.16px;" width="12" height="12" viewBox="0 0 12 12"><path d="M2.2 6.2 L4.9 8.8 L10 3" fill="none" stroke="#2a2a2a" stroke-width="1.1"/></svg>
<div class="a t" style="left:41.80px;top:267.66px;font-size:12.4px;line-height:17px;color:#111;transform:scaleX(0.8640);transform-origin:0 50%;">O_NR</div>
<div class="a" style="left:0.00px;top:284.83px;width:190.20px;height:20.34px;background:#C8C8C8;"></div>
<div class="a" style="left:0.00px;top:284.43px;width:190.20px;height:1.20px;background:rgba(255,255,255,0.42);"></div>
<div class="a" style="left:38.80px;top:284.83px;width:1.00px;height:20.34px;background:rgba(255,255,255,0.38);"></div>
<div class="a" style="left:151.20px;top:284.83px;width:1.00px;height:20.34px;background:rgba(255,255,255,0.38);"></div>
<div class="a" style="left:11.90px;top:287.60px;width:13.80px;height:13.80px;background:#fff;border:1px solid #5c5c5c;"></div>
<svg class="a" style="left:12.80px;top:288.50px;" width="12" height="12" viewBox="0 0 12 12"><path d="M2.2 6.2 L4.9 8.8 L10 3" fill="none" stroke="#2a2a2a" stroke-width="1.1"/></svg>
<div class="a t" style="left:41.80px;top:288.00px;font-size:12.4px;line-height:17px;color:#111;transform:scaleX(0.8271);transform-origin:0 50%;">S_ABL</div>
<div class="a" style="left:0.00px;top:305.17px;width:190.20px;height:20.34px;background:#4C4CCB;"></div>
<div class="a" style="left:0.00px;top:304.77px;width:190.20px;height:1.20px;background:rgba(255,255,255,0.42);"></div>
<div class="a" style="left:38.80px;top:305.17px;width:1.00px;height:20.34px;background:rgba(255,255,255,0.38);"></div>
<div class="a" style="left:151.20px;top:305.17px;width:1.00px;height:20.34px;background:rgba(255,255,255,0.38);"></div>
<div class="a" style="left:11.90px;top:307.95px;width:13.80px;height:13.80px;background:#fff;border:1px solid #5c5c5c;"></div>
<svg class="a" style="left:12.80px;top:308.85px;" width="12" height="12" viewBox="0 0 12 12"><path d="M2.2 6.2 L4.9 8.8 L10 3" fill="none" stroke="#2a2a2a" stroke-width="1.1"/></svg>
<div class="a t" style="left:41.80px;top:308.35px;font-size:12.4px;line-height:17px;color:#fff;transform:scaleX(0.8997);transform-origin:0 50%;">S_AO</div>
<div class="a" style="left:0.00px;top:325.52px;width:190.20px;height:20.34px;background:#CACB4B;"></div>
<div class="a" style="left:0.00px;top:325.12px;width:190.20px;height:1.20px;background:rgba(255,255,255,0.42);"></div>
<div class="a" style="left:38.80px;top:325.52px;width:1.00px;height:20.34px;background:rgba(255,255,255,0.38);"></div>
<div class="a" style="left:151.20px;top:325.52px;width:1.00px;height:20.34px;background:rgba(255,255,255,0.38);"></div>
<div class="a" style="left:11.90px;top:328.29px;width:13.80px;height:13.80px;background:#fff;border:1px solid #5c5c5c;"></div>
<svg class="a" style="left:12.80px;top:329.19px;" width="12" height="12" viewBox="0 0 12 12"><path d="M2.2 6.2 L4.9 8.8 L10 3" fill="none" stroke="#2a2a2a" stroke-width="1.1"/></svg>
<div class="a t" style="left:41.80px;top:328.69px;font-size:12.4px;line-height:17px;color:#111;transform:scaleX(0.8394);transform-origin:0 50%;">S_DS</div>
<div class="a" style="left:0.00px;top:345.87px;width:190.20px;height:20.34px;background:#4CCBCB;"></div>
<div class="a" style="left:0.00px;top:345.47px;width:190.20px;height:1.20px;background:rgba(255,255,255,0.42);"></div>
<div class="a" style="left:38.80px;top:345.87px;width:1.00px;height:20.34px;background:rgba(255,255,255,0.38);"></div>
<div class="a" style="left:151.20px;top:345.87px;width:1.00px;height:20.34px;background:rgba(255,255,255,0.38);"></div>
<div class="a" style="left:11.90px;top:348.64px;width:13.80px;height:13.80px;background:#fff;border:1px solid #5c5c5c;"></div>
<svg class="a" style="left:12.80px;top:349.54px;" width="12" height="12" viewBox="0 0 12 12"><path d="M2.2 6.2 L4.9 8.8 L10 3" fill="none" stroke="#2a2a2a" stroke-width="1.1"/></svg>
<div class="a t" style="left:41.80px;top:349.04px;font-size:12.4px;line-height:17px;color:#111;transform:scaleX(0.8815);transform-origin:0 50%;">S_MS</div>
<div class="a" style="left:0.00px;top:366.21px;width:190.20px;height:20.34px;background:#CB4CCB;"></div>
<div class="a" style="left:0.00px;top:365.81px;width:190.20px;height:1.20px;background:rgba(255,255,255,0.42);"></div>
<div class="a" style="left:38.80px;top:366.21px;width:1.00px;height:20.34px;background:rgba(255,255,255,0.38);"></div>
<div class="a" style="left:151.20px;top:366.21px;width:1.00px;height:20.34px;background:rgba(255,255,255,0.38);"></div>
<div class="a" style="left:11.90px;top:368.98px;width:13.80px;height:13.80px;background:#fff;border:1px solid #5c5c5c;"></div>
<svg class="a" style="left:12.80px;top:369.88px;" width="12" height="12" viewBox="0 0 12 12"><path d="M2.2 6.2 L4.9 8.8 L10 3" fill="none" stroke="#2a2a2a" stroke-width="1.1"/></svg>
<div class="a t" style="left:41.80px;top:369.38px;font-size:12.4px;line-height:17px;color:#111;transform:scaleX(0.8969);transform-origin:0 50%;">S_NM</div>
<div class="a" style="left:0.00px;top:386.55px;width:190.20px;height:20.34px;background:#4C9BCB;"></div>
<div class="a" style="left:0.00px;top:386.15px;width:190.20px;height:1.20px;background:rgba(255,255,255,0.42);"></div>
<div class="a" style="left:38.80px;top:386.55px;width:1.00px;height:20.34px;background:rgba(255,255,255,0.38);"></div>
<div class="a" style="left:151.20px;top:386.55px;width:1.00px;height:20.34px;background:rgba(255,255,255,0.38);"></div>
<div class="a" style="left:11.90px;top:389.33px;width:13.80px;height:13.80px;background:#fff;border:1px solid #5c5c5c;"></div>
<svg class="a" style="left:12.80px;top:390.23px;" width="12" height="12" viewBox="0 0 12 12"><path d="M2.2 6.2 L4.9 8.8 L10 3" fill="none" stroke="#2a2a2a" stroke-width="1.1"/></svg>
<div class="a t" style="left:41.80px;top:389.73px;font-size:12.4px;line-height:17px;color:#111;transform:scaleX(0.8818);transform-origin:0 50%;">S_OO</div>
</div>
<div class="a" style="left:993.20px;top:115.00px;width:17.80px;height:435.80px;background:#F0F0F0;"></div>
<div class="a" style="left:993.70px;top:131.80px;width:16.50px;height:135.00px;background:#CDCDCD;"></div>
<svg class="a" style="left:997.20px;top:121.00px;" width="10" height="7" viewBox="0 0 10 7"><path d="M1.4 5.4 L4.9 1.8 L8.4 5.4" fill="none" stroke="#454545" stroke-width="1.9"/></svg>
<svg class="a" style="left:997.20px;top:537.60px;" width="10" height="7" viewBox="0 0 10 7"><path d="M1.4 1.6 L4.9 5.2 L8.4 1.6" fill="none" stroke="#454545" stroke-width="1.9"/></svg>
<div class="a" style="left:803.00px;top:550.80px;width:190.20px;height:17.20px;background:#F0F0F0;"></div>
<div class="a" style="left:993.20px;top:550.80px;width:17.80px;height:17.20px;background:#F0F0F0;"></div>
<div class="a" style="left:821.00px;top:550.80px;width:137.00px;height:17.20px;background:#CDCDCD;"></div>
<svg class="a" style="left:808.50px;top:554.60px;" width="7" height="10" viewBox="0 0 7 10"><path d="M5.2 1.6 L1.8 5 L5.2 8.4" fill="none" stroke="#454545" stroke-width="1.9"/></svg>
<svg class="a" style="left:979.50px;top:554.60px;" width="7" height="10" viewBox="0 0 7 10"><path d="M1.8 1.6 L5.2 5 L1.8 8.4" fill="none" stroke="#454545" stroke-width="1.9"/></svg>
<div class="a" style="left:1024.00px;top:72.00px;width:446.50px;height:504.00px;border:1px solid #E0E0E0;"></div>
<div class="a" style="left:1032.00px;top:67.00px;width:78.00px;height:10.00px;background:#F0F0F0;"></div>
<div class="a t" style="left:1034.50px;top:67.70px;font-size:6.4px;line-height:9px;color:#111;-webkit-text-stroke:0.14px currentColor;transform:scaleX(1.1385);transform-origin:0 50%;">Rules for Undomained</div>
<div class="a" style="left:1032.00px;top:85.00px;width:429.60px;height:484.00px;background:#fff;border:1px solid #8f949c;"></div>
<div class="a" style="left:1033.00px;top:104.90px;width:427.60px;height:1.00px;background:#E3E3E3;"></div>
<div class="a" style="left:1033.00px;top:131.50px;width:427.60px;height:1.00px;background:#E3E3E3;"></div>
<div class="a" style="left:1033.00px;top:152.90px;width:427.60px;height:1.00px;background:#E3E3E3;"></div>
<div class="a" style="left:1033.00px;top:173.00px;width:427.60px;height:1.00px;background:#E3E3E3;"></div>
<div class="a" style="left:1033.00px;top:192.90px;width:427.60px;height:1.00px;background:#E3E3E3;"></div>
<div class="a" style="left:1033.00px;top:213.50px;width:427.60px;height:1.00px;background:#E3E3E3;"></div>
<div class="a" style="left:1033.00px;top:234.00px;width:427.60px;height:1.00px;background:#E3E3E3;"></div>
<div class="a" style="left:1033.00px;top:254.00px;width:427.60px;height:1.00px;background:#E3E3E3;"></div>
<div class="a" style="left:1033.00px;top:281.00px;width:427.60px;height:1.00px;background:#E3E3E3;"></div>
<div class="a" style="left:1189.10px;top:86.00px;width:1.00px;height:195.50px;background:#E3E3E3;"></div>
<div class="a" style="left:1229.70px;top:86.00px;width:1.00px;height:195.50px;background:#E3E3E3;"></div>
<div class="a t" style="left:1035.80px;top:87.60px;font-size:11.5px;line-height:16px;color:#000;font-weight:bold;transform:scaleX(1.0526);transform-origin:0 50%;">UGdrilling</div>
<div class="a" style="left:1034.00px;top:106.80px;width:155.20px;height:24.80px;background:#E1E1E1;border:1px solid #BBBBBB;"></div>
<div class="a t" style="left:1100.85px;top:111.30px;font-size:11.5px;line-height:16px;color:#111;transform:scaleX(1.0345);transform-origin:0 50%;">Edit</div>
<div class="a t" style="left:1035.60px;top:155.80px;font-size:11.5px;line-height:16px;color:#000;font-weight:bold;transform:scaleX(1.0084);transform-origin:0 50%;">Filters</div>
<div class="a t" style="left:1035.80px;top:175.80px;font-size:11.5px;line-height:16px;color:#111;transform:scaleX(1.0885);transform-origin:0 50%;">Match entire drillhole</div>
<div class="a t" style="left:1035.80px;top:216.50px;font-size:11.5px;line-height:16px;color:#000;font-weight:bold;transform:scaleX(1.0858);transform-origin:0 50%;">Modifiers</div>
<div class="a" style="left:1035.20px;top:256.30px;width:153.80px;height:24.50px;background:#E1E1E1;border:1px solid #BBBBBB;"></div>
<svg class="a" style="left:1091.50px;top:261.00px;" width="15" height="15" viewBox="0 0 15 15"><path d="M13.2 3.6 V0.8 H0.6 V13.2 H5.6" fill="none" stroke="#a4a8ad" stroke-width="1"/><path d="M6.4 7 L11.4 12" stroke="#1E86C6" stroke-width="2.2"/><path d="M13.8 7.6 V14.2 H7.2 Z" fill="#1E86C6"/></svg>
<div class="a t" style="left:1109.50px;top:261.20px;font-size:11.5px;line-height:16px;color:#111;transform:scaleX(1.1813);transform-origin:0 50%;">Import</div>
<div class="a" style="left:667.00px;top:585.00px;width:14.00px;height:13.80px;background:#fff;border:1px solid #5c5c5c;"></div>
<div class="a t" style="left:686.40px;top:587.80px;font-size:6.4px;line-height:9px;color:#111;-webkit-text-stroke:0.14px currentColor;transform:scaleX(1.1852);transform-origin:0 50%;">Overwrite manually set intervals</div>
<div class="a" style="left:667.60px;top:603.00px;width:76.00px;height:21.00px;background:#E1E1E1;border:1px solid #B2B2B2;"></div>
<div class="a t" style="left:681.00px;top:609.80px;font-size:6.6px;line-height:9px;color:#111;-webkit-text-stroke:0.14px currentColor;transform:scaleX(1.1037);transform-origin:0 50%;">Run domaining</div>
<div class="a t" style="left:1245.50px;top:587.50px;font-size:6.4px;line-height:9px;color:#111;-webkit-text-stroke:0.14px currentColor;transform:scaleX(1.1028);transform-origin:0 50%;">Visualisation</div>
<div class="a" style="left:1294.00px;top:585.00px;width:182.70px;height:13.60px;background:#E1E1E1;border:1px solid #C4C4C4;"></div>
<div class="a t" style="left:1296.70px;top:587.80px;font-size:6.4px;line-height:9px;color:#111;-webkit-text-stroke:0.14px currentColor;transform:scaleX(1.1681);transform-origin:0 50%;">Intervals coloured and labelled with comparison</div>
<svg class="a" style="left:1464.50px;top:589.00px;" width="9" height="6" viewBox="0 0 9 6"><path d="M0.3 0.5 H8.7 L4.5 5 Z" fill="#7A7A7A"/></svg>
<svg class="a" style="left:0.00px;top:120.00px;" width="80" height="50" viewBox="0 0 80 50"><defs><filter id="sh1" x="-20%" y="-20%" width="140%" height="150%"><feGaussianBlur stdDeviation="1.2"/></filter></defs><path d="M0 20.4 H36.5 V10 L67 25 L36.5 40 V30 H0 Z" fill="#000" opacity="0.35" filter="url(#sh1)" transform="translate(1,1.5)"/><path d="M0 18.4 H35 V8 L65 23 L35 38 V28 H0 Z" fill="#1D9E2F"/></svg>
<svg class="a" style="left:600.00px;top:290.00px;" width="220" height="70" viewBox="0 0 220 70"><defs><filter id="sh2" x="-20%" y="-20%" width="140%" height="150%"><feGaussianBlur stdDeviation="1.4"/></filter></defs><path d="M14 25 H163 V12 L203 32 L163 52 V38 H14 Z" fill="#000" opacity="0.35" filter="url(#sh2)" transform="translate(1,2)"/><path d="M14 25 H163 V12 L202.6 31.6 L163 51 V38 H14 Z" fill="#1D9E2F"/></svg>
</body></html>
